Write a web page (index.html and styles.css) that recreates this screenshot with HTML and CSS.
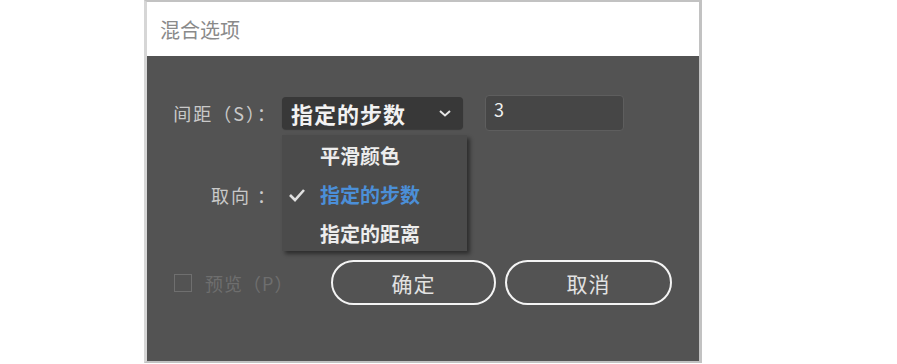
FILE: index.html
```html
<!DOCTYPE html>
<html lang="zh">
<head>
<meta charset="utf-8">
<link rel="stylesheet" href="styles.css">
</head>
<body>
<div class="dialog">
  <div class="titlebar">混合选项</div>
  <div class="content">
    <div class="row row-spacing">
      <div class="label">间距（S）：</div>
      <div class="select-wrap">
        <div class="select">
          <span class="select-text">指定的步数</span>
          <svg class="chevron" width="14" height="10" viewBox="0 0 14 10"><polyline points="2,3 7,7.5 12,3" fill="none" stroke="#e6e6e6" stroke-width="2"/></svg>
        </div>
        <div class="menu">
          <div class="item">平滑颜色</div>
          <div class="item active">
            <svg class="check" width="18" height="14" viewBox="0 0 18 14"><polyline points="2,7 7,12 16,2" fill="none" stroke="#e0e0e0" stroke-width="2.6"/></svg>
            指定的步数
          </div>
          <div class="item">指定的距离</div>
        </div>
      </div>
      <div class="input">3</div>
    </div>
    <div class="row row-orient">
      <div class="label">取向 ：</div>
    </div>
    <div class="row row-actions">
      <div class="preview">
        <span class="checkbox"></span>
        <span class="preview-text">预览（P）</span>
      </div>
      <div class="btn btn-ok">确定</div>
      <div class="btn btn-cancel">取消</div>
    </div>
  </div>
</div>
</body>
</html>
```
FILE: styles.css
```css
html, body {
  margin: 0;
  padding: 0;
  background: #ffffff;
}
body {
  font-family: "Noto Sans CJK SC", "Noto Sans", sans-serif;
}
.dialog {
  margin-left: 144px;
  width: 552px;
  border: 3px solid #c2c2c2;
  border-top-width: 2px;
  border-bottom-width: 2px;
  border-left-color: #d6d6d6;
}
.titlebar {
  height: 54px;
  background: #ffffff;
  display: flex;
  align-items: center;
  padding-left: 13px;
  font-size: 20px;
  color: #8a8a8a;
}
.content {
  background: #535353;
  height: 305px;
  box-sizing: border-box;
  padding-top: 41px;
}
.row {
  display: flex;
  align-items: center;
}
.label {
  width: 130px;
  text-align: right;
  font-size: 18px;
  color: #c9c9c9;
  letter-spacing: 2px;
}
.row-spacing {
  height: 32px;
}
.select-wrap {
  position: relative;
  margin-left: 5px;
}
.select {
  width: 181px;
  height: 32px;
  box-sizing: border-box;
  background: #383838;
  border-radius: 4px;
  display: flex;
  align-items: center;
  padding-left: 9px;
  padding-right: 11px;
  justify-content: space-between;
  box-shadow: 0 1px 1px rgba(0,0,0,0.3);
}
.select-text {
  font-size: 22px;
  font-weight: 700;
  color: #f2f2f2;
  line-height: 1;
  letter-spacing: 1px;
}
.chevron {
  display: block;
}
.menu {
  position: absolute;
  left: 0;
  top: 38px;
  width: 185px;
  height: 116px;
  background: #4b4b4b;
  box-shadow: 3px 3px 4px rgba(0,0,0,0.45);
  padding-top: 1px;
  box-sizing: border-box;
  z-index: 2;
}
.item {
  position: relative;
  height: 39px;
  display: flex;
  align-items: center;
  padding-left: 38px;
  font-size: 20px;
  font-weight: 700;
  color: #ededed;
}
.item.active {
  color: #4b8fd8;
}
.check {
  position: absolute;
  left: 6px;
  top: 13px;
}
.input {
  margin-left: 22px;
  width: 139px;
  height: 36px;
  box-sizing: border-box;
  background: #464646;
  border: 1px solid #5e5e5e;
  border-radius: 4px;
  padding-left: 8px;
  font-size: 18px;
  color: #f0f0f0;
  line-height: 26px;
  align-self: center;
}
.row-orient {
  height: 32px;
  margin-top: 50px;
}
.row-actions {
  margin-top: 49px;
  height: 45px;
}
.preview {
  width: 157px;
  margin-left: 27px;
  display: flex;
  align-items: center;
  gap: 13px;
}
.checkbox {
  width: 18px;
  height: 18px;
  box-sizing: border-box;
  border: 1.5px solid #6f6f6f;
}
.preview-text {
  font-size: 18px;
  color: #6e6e6e;
  letter-spacing: 1px;
}
.btn {
  height: 45px;
  box-sizing: border-box;
  border: 2.5px solid #f4f4f4;
  border-radius: 23px;
  display: flex;
  align-items: center;
  justify-content: center;
  font-size: 21px;
  color: #e2e2e2;
  letter-spacing: 1px;
}
.btn-ok {
  width: 165px;
}
.btn-cancel {
  width: 167px;
  margin-left: 9px;
}
```
